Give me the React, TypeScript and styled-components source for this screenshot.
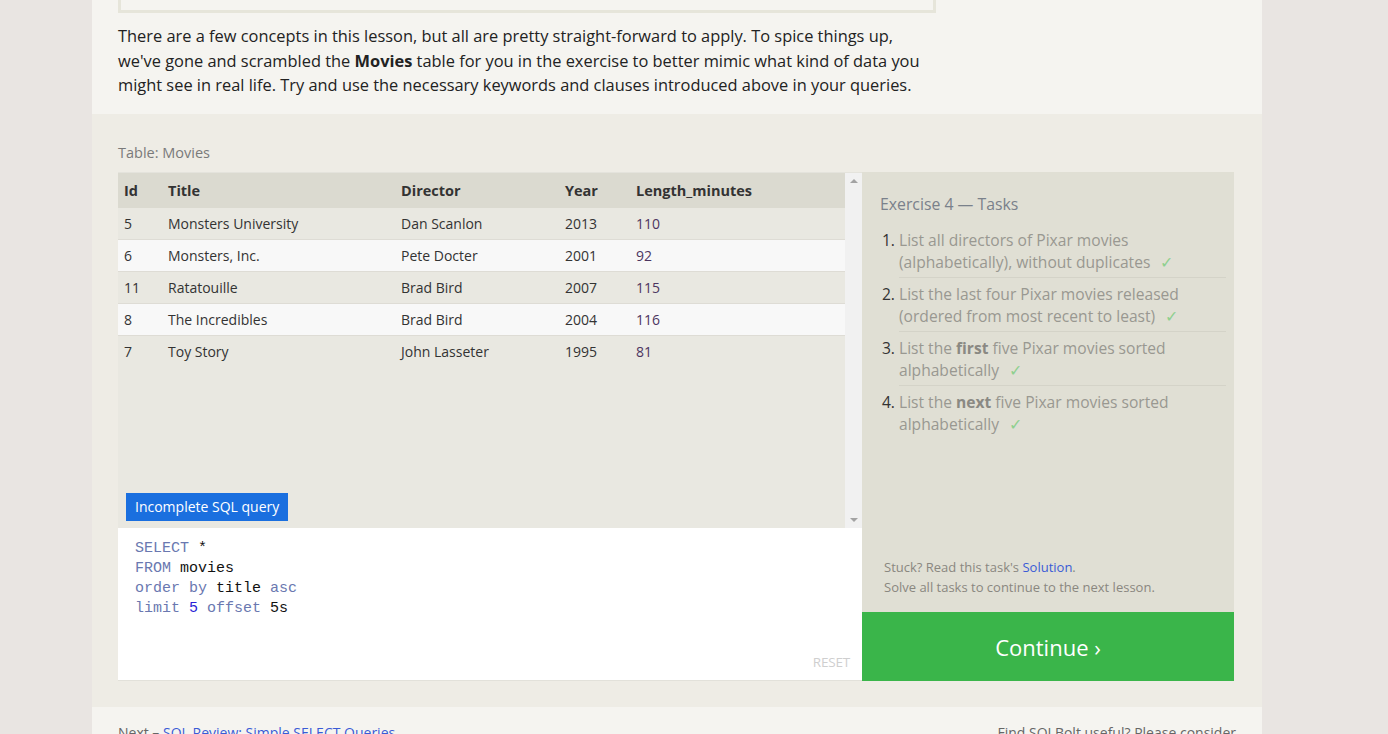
import React from "react";
import styled, { createGlobalStyle } from "styled-components";

const Global = createGlobalStyle`
  html, body { margin: 0; padding: 0; background: #e9e5e2; }
  body { font-family: "Open Sans", "Noto Sans", sans-serif; overflow: hidden; }
  * { box-sizing: border-box; }
`;

const Page = styled.div`
  width: 1170px;
  margin-left: 92px;
  background: #f5f4f0;
  height: 734px;
  overflow: hidden;
`;

const Intro = styled.div`
  padding: 0 326px 0 26px;
`;

const PrevBox = styled.div`
  width: 818px;
  height: 13px;
  border: 3px solid #e6e5da;
  border-top: none;
`;

const Para = styled.p`
  margin: 11px 0 0 0;
  font-size: 16.4px;
  line-height: 24.5px;
  color: #222;
  width: 818px;
  b { font-weight: 700; }
`;

const Exercise = styled.section`
  margin-top: 16px;
  background: #eeece5;
  padding: 29px 28px 26px 26px;
`;

const TableLabel = styled.div`
  font-size: 14.5px;
  line-height: 20px;
  color: #7a7a7a;
  margin-bottom: 9px;
`;

const Widget = styled.div`
  display: grid;
  grid-template-columns: 744px 372px;
  grid-template-rows: 440px 69px;
  height: 509px;
`;

const LeftCol = styled.div`
  grid-row: 1 / span 2;
  display: flex;
  flex-direction: column;
`;

const TableArea = styled.div`
  position: relative;
  height: 356px;
  display: flex;
  background: #e9e8e1;
  border-top: 1px solid #e4e3dc;
`;

const TableScroll = styled.div`
  flex: 1;
`;

const Table = styled.table`
  width: 100%;
  border-collapse: collapse;
  font-size: 14px;
  color: #333;
`;

const Th = styled.th<{ w?: number }>`
  text-align: left;
  font-weight: 700;
  font-size: 14.5px;
  background: #dbdad0;
  height: 35px;
  padding: 1px 0 0 6px;
  width: ${(p) => (p.w ? `${p.w}px` : "auto")};
  color: #333;
`;

const Tr = styled.tr<{ alt?: boolean }>`
  background: ${(p) => (p.alt ? "#f8f8f8" : "#e9e8e1")};
  border-bottom: 1px solid #dedcd5;
  &:last-child { border-bottom: none; }
`;

const Td = styled.td<{ num?: boolean }>`
  height: 32px;
  padding: 0 0 0 6px;
  color: ${(p) => (p.num ? "#4c3560" : "#333")};
`;

const ScrollBar = styled.div`
  width: 17px;
  background: #f1f1f1;
  display: flex;
  flex-direction: column;
  justify-content: space-between;
  align-items: center;
  padding: 6px 0 6px;
`;

const Arrow = styled.div<{ down?: boolean }>`
  width: 0;
  height: 0;
  border-left: 4px solid transparent;
  border-right: 4px solid transparent;
  ${(p) =>
    p.down
      ? "border-top: 4px solid #a3a3a3;"
      : "border-bottom: 4px solid #a3a3a3;"}
`;

const Badge = styled.div`
  position: absolute;
  left: 8px;
  bottom: 7px;
  background: #1a6fdf;
  color: #fff;
  font-size: 14px;
  height: 28px;
  line-height: 28px;
  padding: 0 9px;
`;

const Editor = styled.div`
  flex: 1;
  background: #fff;
  position: relative;
  padding: 11px 17px;
  border-bottom: 1px solid #e2e1da;
`;

const Code = styled.pre`
  margin: 0;
  font-family: "Liberation Mono", "DejaVu Sans Mono", monospace;
  font-size: 15px;
  line-height: 20px;
  color: #111;
`;

const Kw = styled.span`
  color: #6a78b0;
`;

const Num = styled.span`
  color: #2b1fd6;
`;

const Reset = styled.div`
  position: absolute;
  right: 12px;
  bottom: 9px;
  font-size: 13.5px;
  color: #cfcfcf;
  letter-spacing: -0.2px;
`;

const Tasks = styled.div`
  background: #e0dfd4;
  padding: 20px 8px 0 18px;
  display: flex;
  flex-direction: column;
`;

const TaskHead = styled.h3`
  margin: 0 0 13px 0;
  font-weight: 400;
  font-size: 15.8px;
  line-height: 24px;
  color: #7a818b;
`;

const List = styled.ol`
  margin: 0;
  padding: 0 0 0 19px;
  flex: 1;
`;

const Item = styled.li<{ last?: boolean }>`
  font-size: 15.6px;
  line-height: 22.5px;
  color: #999891;
  padding: 0 0 3px 0;
  margin-bottom: 5px;
  border-bottom: ${(p) => (p.last ? "none" : "1px solid #d4d3c8")};
  &::marker { color: #333; }
  b { color: #8a8983; font-weight: 700; }
`;

const Check = styled.span`
  color: #8fd08f;
  margin-left: 10px;
`;

const Help = styled.div`
  font-size: 13px;
  line-height: 20px;
  color: #8a8780;
  padding: 0 0 15px 4px;
`;

const Link = styled.a`
  color: #3a5bd6;
  text-decoration: none;
`;

const Continue = styled.button`
  grid-column: 2;
  border: none;
  background: #3ab54a;
  color: #fff;
  font-family: inherit;
  font-size: 22px;
  padding-top: 2px;
  cursor: pointer;
`;

const Footer = styled.div`
  display: flex;
  justify-content: space-between;
  padding: 16px 26px 0 26px;
  font-size: 14px;
  color: #666;
`;

const rows = [
  ["5", "Monsters University", "Dan Scanlon", "2013", "110"],
  ["6", "Monsters, Inc.", "Pete Docter", "2001", "92"],
  ["11", "Ratatouille", "Brad Bird", "2007", "115"],
  ["8", "The Incredibles", "Brad Bird", "2004", "116"],
  ["7", "Toy Story", "John Lasseter", "1995", "81"],
];

export default function App() {
  return (
    <>
      <Global />
      <Page>
        <Intro>
          <PrevBox />
          <Para>
            There are a few concepts in this lesson, but all are pretty straight-forward to apply. To spice things up,
            we've gone and scrambled the <b>Movies</b> table for you in the exercise to better mimic what kind of data you
            might see in real life. Try and use the necessary keywords and clauses introduced above in your queries.
          </Para>
        </Intro>
        <Exercise>
          <TableLabel>Table: Movies</TableLabel>
          <Widget>
            <LeftCol>
              <TableArea>
                <TableScroll>
                  <Table>
                    <thead>
                      <tr>
                        <Th w={44}>Id</Th>
                        <Th w={233}>Title</Th>
                        <Th w={164}>Director</Th>
                        <Th w={71}>Year</Th>
                        <Th>Length_minutes</Th>
                      </tr>
                    </thead>
                    <tbody>
                      {rows.map((r, i) => (
                        <Tr key={r[0]} alt={i % 2 === 1}>
                          <Td>{r[0]}</Td>
                          <Td>{r[1]}</Td>
                          <Td>{r[2]}</Td>
                          <Td>{r[3]}</Td>
                          <Td num>{r[4]}</Td>
                        </Tr>
                      ))}
                    </tbody>
                  </Table>
                </TableScroll>
                <ScrollBar>
                  <Arrow />
                  <Arrow down />
                </ScrollBar>
                <Badge>Incomplete SQL query</Badge>
              </TableArea>
              <Editor>
                <Code>
                  <Kw>SELECT</Kw> *{"\n"}
                  <Kw>FROM</Kw> movies{"\n"}
                  <Kw>order by</Kw> title <Kw>asc</Kw>{"\n"}
                  <Kw>limit</Kw> <Num>5</Num> <Kw>offset</Kw> 5s
                </Code>
                <Reset>RESET</Reset>
              </Editor>
            </LeftCol>
            <Tasks>
              <TaskHead>Exercise 4 — Tasks</TaskHead>
              <List>
                <Item>
                  List all directors of Pixar movies (alphabetically), without duplicates<Check>✓</Check>
                </Item>
                <Item>
                  List the last four Pixar movies released (ordered from most recent to least)<Check>✓</Check>
                </Item>
                <Item>
                  List the <b>first</b> five Pixar movies sorted alphabetically<Check>✓</Check>
                </Item>
                <Item last>
                  List the <b>next</b> five Pixar movies sorted alphabetically<Check>✓</Check>
                </Item>
              </List>
              <Help>
                Stuck? Read this task's <Link href="#">Solution</Link>.
                <br />
                Solve all tasks to continue to the next lesson.
              </Help>
            </Tasks>
            <Continue>Continue ›</Continue>
          </Widget>
        </Exercise>
        <Footer>
          <span>
            Next – <Link href="#">SQL Review: Simple SELECT Queries</Link>
          </span>
          <span>Find SQLBolt useful? Please consider</span>
        </Footer>
      </Page>
    </>
  );
}
